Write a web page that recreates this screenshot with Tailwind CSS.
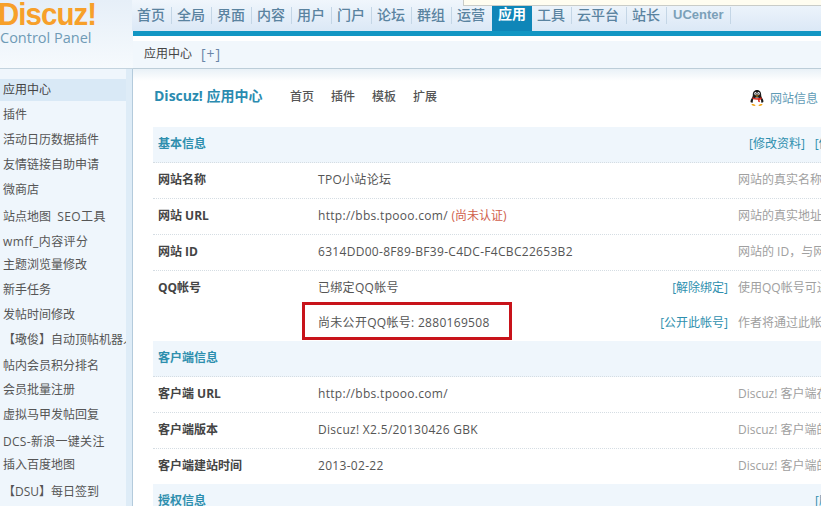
<!DOCTYPE html>
<html lang="zh-CN">
<head>
  <meta charset="UTF-8" />
  <title>Discuz! Control Panel</title>
  <script src="https://cdn.jsdelivr.net/npm/@tailwindcss/browser@4"></script>
</head>
<body class="bg-white">
  <div class="relative flex w-[821px] h-[506px] overflow-hidden text-[12px] text-[#555] font-['Open_Sans','Noto_Sans_CJK_SC',sans-serif]">

    <!-- left column -->
    <aside class="w-[133px] shrink-0 flex flex-col">
      <div class="h-[68px] shrink-0 overflow-hidden bg-gradient-to-b from-[#e6eff8] to-[#f6fafd]">
        <div class="h-[30px] -ml-[2px] -mt-[1px] origin-left scale-x-[0.92] font-['Liberation_Sans',sans-serif] font-bold text-[32px] leading-[30px] tracking-[-1px] text-[#f7a02a] whitespace-nowrap">Discuz!</div>
        <div class="text-[14.5px] leading-[18px] text-[#6f9bb6] whitespace-nowrap">Control Panel</div>
      </div>
      <div class="flex-1 min-h-0 flex border-t border-[#c3d3de]">
        <ul class="w-[126px] bg-[#eff6fc] pt-[10px] whitespace-nowrap overflow-hidden">
          <li class="h-[22px] pl-[3px] leading-[22px] bg-[#d9e9f6] text-[#444]">应用中心</li>
          <li class="h-[26px] pl-[3px] leading-[28px]">插件</li>
          <li class="h-[25px] pl-[3px] leading-[25px]">活动日历数据插件</li>
          <li class="h-[25px] pl-[3px] leading-[25px]">友情链接自助申请</li>
          <li class="h-[25px] pl-[3px] leading-[25px]">微商店</li>
          <li class="h-[27px] pl-[3px] leading-[29px]">站点地图&nbsp; <span class="tracking-[0.4px]">SEO工具</span></li>
          <li class="h-[24px] pl-[3px] leading-[26px] tracking-[0.4px]">wmff_内容评分</li>
          <li class="h-[23px] pl-[3px] leading-[23px]">主题浏览量修改</li>
          <li class="h-[25px] pl-[3px] leading-[27px]">新手任务</li>
          <li class="h-[25px] pl-[3px] leading-[27px]">发帖时间修改</li>
          <li class="h-[25px] pl-[3px] leading-[27px]">【璥俊】自动顶帖机器人</li>
          <li class="h-[27px] pl-[3px] leading-[29px]">帖内会员积分排名</li>
          <li class="h-[23px] pl-[3px] leading-[23px]">会员批量注册</li>
          <li class="h-[26px] pl-[3px] leading-[28px]">虚拟马甲发帖回复</li>
          <li class="h-[27px] pl-[3px] leading-[29px] tracking-[0.3px]">DCS-新浪一键关注</li>
          <li class="h-[23px] pl-[3px] leading-[21px]">插入百度地图</li>
          <li class="h-[29px] pl-[3px] leading-[29px]">【DSU】每日签到</li>
        </ul>
        <div class="flex-1 bg-[#deecf7] border-r border-[#b4cbdc]"></div>
      </div>
    </aside>

    <!-- right column -->
    <div class="flex-1 min-w-0 flex flex-col">
      <nav class="h-[31px] shrink-0 flex items-stretch bg-gradient-to-b from-[#f0f6fc] to-[#dbe8f6] text-[14px] font-medium text-[#5a83a0] whitespace-nowrap -ml-[1px]">
        <a class="flex items-center h-full pl-[5px] pb-[2px] relative after:absolute after:right-0 after:top-[7px] after:h-[17px] after:w-px after:bg-[#c4d6e6] w-[40px]">首页</a>
        <a class="flex items-center h-full pl-[5px] pb-[2px] relative after:absolute after:right-0 after:top-[7px] after:h-[17px] after:w-px after:bg-[#c4d6e6] w-[40px]">全局</a>
        <a class="flex items-center h-full pl-[5px] pb-[2px] relative after:absolute after:right-0 after:top-[7px] after:h-[17px] after:w-px after:bg-[#c4d6e6] w-[40px]">界面</a>
        <a class="flex items-center h-full pl-[5px] pb-[2px] relative after:absolute after:right-0 after:top-[7px] after:h-[17px] after:w-px after:bg-[#c4d6e6] w-[40px]">内容</a>
        <a class="flex items-center h-full pl-[5px] pb-[2px] relative after:absolute after:right-0 after:top-[7px] after:h-[17px] after:w-px after:bg-[#c4d6e6] w-[40px]">用户</a>
        <a class="flex items-center h-full pl-[5px] pb-[2px] relative after:absolute after:right-0 after:top-[7px] after:h-[17px] after:w-px after:bg-[#c4d6e6] w-[40px]">门户</a>
        <a class="flex items-center h-full pl-[5px] pb-[2px] relative after:absolute after:right-0 after:top-[7px] after:h-[17px] after:w-px after:bg-[#c4d6e6] w-[40px]">论坛</a>
        <a class="flex items-center h-full pl-[5px] pb-[2px] relative after:absolute after:right-0 after:top-[7px] after:h-[17px] after:w-px after:bg-[#c4d6e6] w-[40px]">群组</a>
        <a class="flex items-center h-full pl-[5px] pb-[2px] w-[40px]">运营</a>
        <a class="flex items-center justify-center h-full w-[40px] pb-[5px] bg-[#0f86b8] text-white font-bold">应用</a>
        <a class="flex items-center h-full pl-[5px] pb-[2px] relative after:absolute after:right-0 after:top-[7px] after:h-[17px] after:w-px after:bg-[#c4d6e6] w-[40px]">工具</a>
        <a class="flex items-center h-full pl-[5px] pb-[2px] relative after:absolute after:right-0 after:top-[7px] after:h-[17px] after:w-px after:bg-[#c4d6e6] w-[55px]">云平台</a>
        <a class="flex items-center h-full pl-[5px] pb-[2px] relative after:absolute after:right-0 after:top-[7px] after:h-[17px] after:w-px after:bg-[#c4d6e6] w-[40px]">站长</a>
        <a class="flex items-center h-full pl-[6px] pb-[2px] relative after:absolute after:right-0 after:top-[7px] after:h-[17px] after:w-px after:bg-[#c4d6e6] w-[64px] text-[13px] font-bold text-[#7ba0b8] font-['Liberation_Sans',sans-serif]">UCenter</a>
      </nav>
      <div class="h-[5px] shrink-0 bg-[#1296c3]"></div>
      <div class="h-[5px] shrink-0 bg-white"></div>
      <div class="h-[27px] shrink-0 flex items-center pl-[11px] pb-[2px] bg-[#f1f7fc] text-[#444]">
        <span>应用中心</span><span class="ml-[9px] text-[14px] tracking-[1px] text-[#6a86a8]">[+]</span>
      </div>
      <div class="h-[1px] shrink-0 bg-[#bccdd8]"></div>

      <main class="flex-1 min-h-0 pl-[20px] bg-gradient-to-b from-[#e9f1f7] from-0% to-white to-[12px]">
        <div class="h-[58px] flex items-center whitespace-nowrap pl-px">
          <span class="w-[136px] shrink-0 -mt-[6px] text-[14px] font-bold text-[#2a8bb0]">Discuz! 应用中心</span>
          <span class="w-[41px] shrink-0 -mt-[2px] font-medium text-[#555]">首页</span>
          <span class="w-[41px] shrink-0 -mt-[2px] font-medium text-[#555]">插件</span>
          <span class="w-[41px] shrink-0 -mt-[2px] font-medium text-[#555]">模板</span>
          <span class="w-[336px] shrink-0 -mt-[2px] font-medium text-[#555]">扩展</span>
          <svg class="w-[16px] h-[18px] shrink-0" viewBox="0 0 16 18">
            <path d="M8 1C5 1 3.800 3.400 3.800 6c0 1-.3 2-1.200 3.400C1.400 11.300 1.200 13 2 13.400L13.800 13.400C14.800 13 14.600 11.300 13.400 9.400 12.500 8 12.200 7 12.200 6 12.200 3.400 11 1 8 1Z" fill="#1c1c1c"/>
            <ellipse cx="8" cy="12.500" rx="4.200" ry="4" fill="#fff"/>
            <ellipse cx="6.500" cy="4.600" rx="1.200" ry="1.500" fill="#fff"/>
            <ellipse cx="9.500" cy="4.600" rx="1.200" ry="1.500" fill="#fff"/>
            <circle cx="6.700" cy="4.800" r=".6" fill="#000"/>
            <circle cx="9.300" cy="4.800" r=".6" fill="#000"/>
            <path d="M6 6.400h4L8 7.800Z" fill="#f2a516"/>
            <path d="M3.600 8.200C6 9.500 10 9.500 12.400 8.200L12.800 10C11 10.800 10.500 11 10.500 11L11 13.200 9.200 12.700 9 10.800C7 10.900 5 10.600 3.400 9.800Z" fill="#d9281c"/>
            <path d="M2.500 15.200C3.500 14.600 6 15.400 6.600 16.400 6 17.200 3 17.200 2.500 15.200ZM13.500 15.200C12.500 14.600 10 15.400 9.400 16.400 10 17.200 13 17.200 13.500 15.200Z" fill="#f2a516"/>
          </svg>
          <span class="ml-[5px] shrink-0 mt-[1px] text-[#5f9bb5]">网站信息</span>
        </div>

        <section class="w-[800px] whitespace-nowrap">
          <div class="h-[36px] flex items-center pl-[5px] pb-[2px] bg-[#eff6fc] border-b border-dotted border-[#d5dde3] text-[#2e8fae]">
            <span class="w-[591px] shrink-0 font-bold">基本信息</span><span class="shrink-0">[修改资料]</span><span class="ml-[10px] shrink-0">[修改资料]</span>
          </div>
          <div class="h-[36px] pb-[2px] grid grid-cols-[165px_410px_1fr] items-center border-b border-dotted border-[#d5dde3]">
            <span class="pl-[5px] font-bold text-[#444]">网站名称</span><span class="tracking-[0.3px]">TPO小站论坛</span><span class="pl-[10px] text-[#a0a0a0]">网站的真实名称，与服务</span>
          </div>
          <div class="h-[36px] pb-[2px] grid grid-cols-[165px_410px_1fr] items-center border-b border-dotted border-[#d5dde3]">
            <span class="pl-[5px] font-bold text-[#444]">网站 URL</span><span class="tracking-[0.3px]">http://bbs.tpooo.com/ <span class="text-[#d0604c] tracking-normal">(尚未认证)</span></span><span class="pl-[10px] text-[#a0a0a0]">网站的真实地址，与服务</span>
          </div>
          <div class="h-[36px] pb-[2px] grid grid-cols-[165px_410px_1fr] items-center border-b border-dotted border-[#d5dde3]">
            <span class="pl-[5px] font-bold text-[#444]">网站 ID</span><span class="tracking-[0.3px]">6314DD00-8F89-BF39-C4DC-F4CBC22653B2</span><span class="pl-[10px] text-[#a0a0a0]">网站的 ID，与网站</span>
          </div>
          <div class="h-[35px] pb-[2px] grid grid-cols-[165px_410px_1fr] items-center">
            <span class="pl-[5px] font-bold text-[#444]">QQ帐号</span>
            <span class="flex justify-between"><span class="tracking-[0.3px]">已绑定QQ帐号</span><span class="text-[#2e8fae]">[解除绑定]</span></span>
            <span class="pl-[10px] text-[#a0a0a0]">使用QQ帐号可进行</span>
          </div>
          <div class="h-[35px] pb-[2px] grid grid-cols-[165px_410px_1fr] items-center">
            <span></span>
            <span class="flex justify-between"><span class="tracking-[0.3px]">尚未公开QQ帐号: 2880169508</span><span class="text-[#2e8fae]">[公开此帐号]</span></span>
            <span class="pl-[10px] text-[#a0a0a0]">作者将通过此帐号</span>
          </div>
          <div class="h-[36px] flex items-center pl-[5px] pb-[2px] bg-[#eff6fc] border-b border-dotted border-[#d5dde3] text-[#2e8fae] font-bold">客户端信息</div>
          <div class="h-[36px] pb-[2px] grid grid-cols-[165px_410px_1fr] items-center border-b border-dotted border-[#d5dde3]">
            <span class="pl-[5px] font-bold text-[#444]">客户端 URL</span><span class="tracking-[0.3px]">http://bbs.tpooo.com/</span><span class="pl-[10px] text-[#a0a0a0]">Discuz! 客户端在</span>
          </div>
          <div class="h-[36px] pb-[2px] grid grid-cols-[165px_410px_1fr] items-center border-b border-dotted border-[#d5dde3]">
            <span class="pl-[5px] font-bold text-[#444]">客户端版本</span><span class="tracking-[0.3px]">Discuz! X2.5/20130426 GBK</span><span class="pl-[10px] text-[#a0a0a0]">Discuz! 客户端的</span>
          </div>
          <div class="h-[35px] pb-[2px] grid grid-cols-[165px_410px_1fr] items-center">
            <span class="pl-[5px] font-bold text-[#444]">客户端建站时间</span><span class="tracking-[0.3px]">2013-02-22</span><span class="pl-[10px] text-[#a0a0a0]">Discuz! 客户端的</span>
          </div>
          <div class="h-[36px] flex items-center pl-[5px] pb-[2px] bg-[#eff6fc] text-[#2e8fae]">
            <span class="w-[657px] shrink-0 font-bold">授权信息</span><span class="shrink-0">[刷新]</span>
          </div>
        </section>
      </main>
    </div>

    <!-- overlays -->
    <div class="absolute left-[463px] top-0 right-0 h-[6px] bg-[#fffdf0] border-l border-b border-[#c9ccc8]"></div>
    <div class="absolute left-[302px] top-[302px] w-[210px] h-[38px] border-[3px] border-[#c8131a]"></div>
  </div>
</body>
</html>
